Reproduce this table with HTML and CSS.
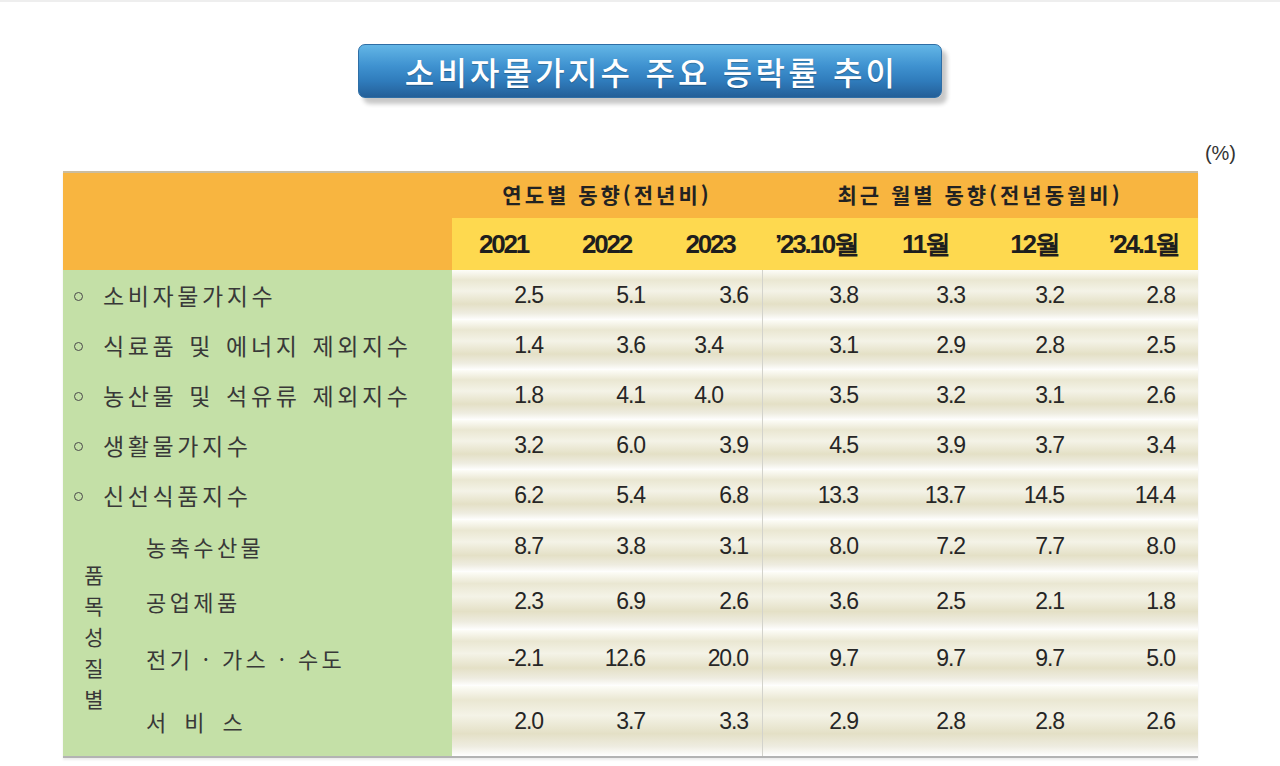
FILE: index.html
```html
<!DOCTYPE html>
<html lang="ko">
<head>
<meta charset="utf-8">
<title>소비자물가지수 주요 등락률 추이</title>
<link rel="stylesheet" href="styles.css">
</head>
<body>
<div class="page">
  <div class="title-wrap">
    <div class="title">소비자물가지수 주요 등락률 추이</div>
  </div>
  <div class="unit">(%)</div>
  <div class="tbl">
    <div class="hcorner"></div>
    <div class="hgroup years">연도별 동향(전년비)</div>
    <div class="hgroup months">최근 월별 동향(전년동월비)</div>
    <div class="hcol">2021</div>
    <div class="hcol">2022</div>
    <div class="hcol">2023</div>
    <div class="hcol">’23.10월</div>
    <div class="hcol">11월</div>
    <div class="hcol">12월</div>
    <div class="hcol">’24.1월</div>

    <div class="row"><div class="lbl"><span class="dot"></span>소비자물가지수</div><div class="d">2.5</div><div class="d">5.1</div><div class="d">3.6</div><div class="d">3.8</div><div class="d">3.3</div><div class="d">3.2</div><div class="d">2.8</div></div>
    <div class="row"><div class="lbl"><span class="dot"></span>식료품 및 에너지 제외지수</div><div class="d">1.4</div><div class="d">3.6</div><div class="d shift">3.4</div><div class="d">3.1</div><div class="d">2.9</div><div class="d">2.8</div><div class="d">2.5</div></div>
    <div class="row"><div class="lbl"><span class="dot"></span>농산물 및 석유류 제외지수</div><div class="d">1.8</div><div class="d">4.1</div><div class="d shift">4.0</div><div class="d">3.5</div><div class="d">3.2</div><div class="d">3.1</div><div class="d">2.6</div></div>
    <div class="row"><div class="lbl"><span class="dot"></span>생활물가지수</div><div class="d">3.2</div><div class="d">6.0</div><div class="d">3.9</div><div class="d">4.5</div><div class="d">3.9</div><div class="d">3.7</div><div class="d">3.4</div></div>
    <div class="row"><div class="lbl"><span class="dot"></span>신선식품지수</div><div class="d">6.2</div><div class="d">5.4</div><div class="d">6.8</div><div class="d">13.3</div><div class="d">13.7</div><div class="d">14.5</div><div class="d">14.4</div></div>

    <div class="vlabel">품목성질별</div>
    <div class="row"><div class="sub">농축수산물</div><div class="d">8.7</div><div class="d">3.8</div><div class="d">3.1</div><div class="d">8.0</div><div class="d">7.2</div><div class="d">7.7</div><div class="d">8.0</div></div>
    <div class="row"><div class="sub">공업제품</div><div class="d">2.3</div><div class="d">6.9</div><div class="d">2.6</div><div class="d">3.6</div><div class="d">2.5</div><div class="d">2.1</div><div class="d">1.8</div></div>
    <div class="row"><div class="sub">전기 · 가스 · 수도</div><div class="d">-2.1</div><div class="d">12.6</div><div class="d">20.0</div><div class="d">9.7</div><div class="d">9.7</div><div class="d">9.7</div><div class="d">5.0</div></div>
    <div class="row"><div class="sub spaced">서 비 스</div><div class="d">2.0</div><div class="d">3.7</div><div class="d">3.3</div><div class="d">2.9</div><div class="d">2.8</div><div class="d">2.8</div><div class="d">2.6</div></div>
  </div>
</div>
</body>
</html>
```

FILE: styles.css
```css
html, body {
  margin: 0;
  padding: 0;
  background: #ffffff;
}

body {
  font-family: "Noto Sans CJK KR", "Noto Sans", sans-serif;
  color: #333333;
  width: 1280px;
  height: 766px;
  overflow: hidden;
  border-top: 2px solid #eeeeee;
  box-sizing: border-box;
}

.page {
  padding-top: 42px;
}

.title-wrap {
  padding-left: 358px;
}

.title {
  width: 584px;
  height: 54px;
  box-sizing: border-box;
  border-radius: 7px;
  background: linear-gradient(to bottom, #63b6e6 0%, #3f92d0 40%, #2f7bbb 70%, #245f98 100%);
  border: 1px solid #2f6ea5;
  box-shadow: 5px 6px 4px rgba(0, 0, 0, 0.22);
  color: #ffffff;
  font-size: 32px;
  font-weight: 500;
  letter-spacing: 3.2px;
  display: flex;
  align-items: center;
  justify-content: center;
  padding-left: 3px;
  text-shadow: 0 1px 1px rgba(0, 0, 0, 0.25);
}

.unit {
  width: 1236px;
  margin-top: 45px;
  height: 20px;
  line-height: 20px;
  text-align: right;
  font-family: "Liberation Sans", Arial, sans-serif;
  font-size: 20px;
  color: #333333;
}

.tbl {
  margin-top: 8px;
  margin-left: 63px;
  width: 1135px;
  display: grid;
  grid-template-columns: 62px 327px 103px 103px 104px 109px 109px 109px 109px;
  grid-template-rows: 45px 52px 50px 50px 50px 50px 50px 52px 58px 56px 70px;
  border-top: 2px solid #cbbd9f;
  border-bottom: 2px solid #b3b3b3;
  box-shadow: 0 2px 2px rgba(0, 0, 0, 0.08);
}

.row {
  display: contents;
}

.hcorner {
  grid-column: 1 / 3;
  grid-row: 1 / 3;
  background: #f8b540;
}

.hgroup {
  grid-row: 1;
  background: #f8b540;
  display: flex;
  align-items: center;
  justify-content: center;
  padding-bottom: 3px;
  font-size: 21px;
  font-weight: 700;
  letter-spacing: 3px;
  color: #222222;
}

.hgroup.years {
  grid-column: 3 / 6;
}

.hgroup.months {
  grid-column: 6 / 10;
}

.hcol {
  grid-row: 2;
  background: #fed94f;
  display: flex;
  align-items: center;
  justify-content: center;
  font-family: "Liberation Sans", Arial, sans-serif;
  font-size: 26px;
  font-weight: 700;
  letter-spacing: -2.2px;
  color: #1e1e1e;
}

.lbl {
  grid-column: 1 / 3;
  background: #c4e0a7;
  display: flex;
  align-items: center;
  padding-left: 11px;
  font-size: 23px;
  letter-spacing: 3.6px;
  word-spacing: 2px;
  color: #383838;
  white-space: nowrap;
}

.dot {
  width: 7px;
  height: 7px;
  border: 1.4px solid #4a4a4a;
  border-radius: 50%;
  margin-right: 20px;
  margin-top: 2px;
  flex: none;
}

.vlabel {
  grid-column: 1;
  grid-row: 8 / 12;
  background: #c4e0a7;
  display: flex;
  align-items: center;
  justify-content: center;
  padding-top: 9px;
  writing-mode: vertical-rl;
  text-orientation: upright;
  font-size: 21px;
  letter-spacing: 10px;
  color: #383838;
}

.sub {
  grid-column: 2;
  background: #c4e0a7;
  display: flex;
  align-items: center;
  padding-left: 21px;
  font-size: 22px;
  letter-spacing: 3.4px;
  color: #383838;
  white-space: nowrap;
}

.sub.spaced {
  word-spacing: 5px;
}

.d {
  display: flex;
  align-items: center;
  justify-content: flex-end;
  font-family: "Liberation Sans", Arial, sans-serif;
  font-size: 23px;
  letter-spacing: -1.1px;
  color: #262626;
  background: linear-gradient(to bottom,
    #fdfdf8 0%,
    #eae7d2 20%,
    #f4f3e7 42%,
    #e4e0c6 68%,
    #eeece0 86%,
    #ffffff 100%);
}

.row .d:nth-child(2) { padding-right: 12px; }
.row .d:nth-child(3) { padding-right: 13px; }
.row .d:nth-child(4) { padding-right: 14px; }
.row .d:nth-child(5) { padding-right: 13px; border-left: 1px solid #d3d3cc; }
.row .d:nth-child(6) { padding-right: 15px; }
.row .d:nth-child(7) { padding-right: 25px; }
.row .d:nth-child(8) { padding-right: 23px; }

.row .d.shift { padding-right: 39px; }
```
